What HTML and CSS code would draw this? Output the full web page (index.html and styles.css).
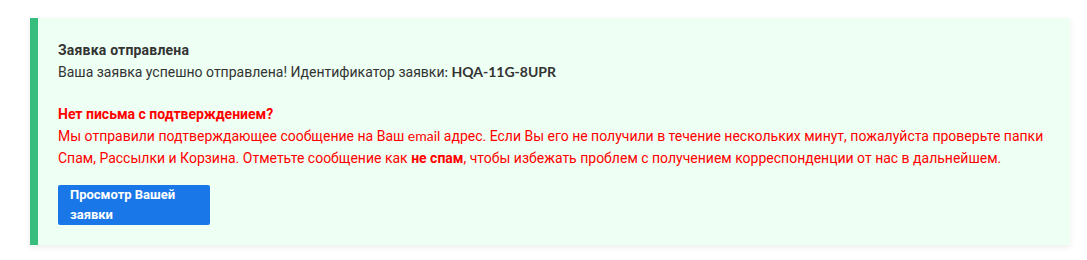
FILE: index.html
```html
<!DOCTYPE html>
<html lang="ru">
<head>
  <meta charset="UTF-8" />
  <title>Заявка отправлена</title>
  <link rel="stylesheet" href="styles.css">
</head>
<body>
  <div class="notice">
    <div class="notice-title">Заявка отправлена</div>
    <div>Ваша заявка успешно отправлена! Идентификатор заявки<span class="latin">:</span> <b class="latin">HQA-11G-8UPR</b></div>

    <div class="warn">
      <div class="warn-title">Нет письма с подтверждением?</div>
      <div>Мы отправили подтверждающее сообщение на Ваш <span class="latin">email</span> адрес. Если Вы его не получили в течение нескольких минут, пожалуйста проверьте папки Спам, Рассылки и Корзина. Отметьте сообщение как <b>не спам</b>, чтобы избежать проблем с получением корреспонденции от нас в дальнейшем.</div>
    </div>

    <a class="btn" href="#">Просмотр Вашей заявки</a>
  </div>
</body>
</html>
```
FILE: styles.css
```css
body {
  margin: 0;
  padding: 18px 17px 15px 30px;
  background: #fff;
  font-family: Roboto, "Noto Sans", sans-serif;
  font-size: 14px;
  color: #333;
}

.notice {
  background: #eefff3;
  border-left: 8px solid #37bd7c;
  box-shadow: 0 2px 6px rgba(0,0,0,0.08);
  padding: 22px 20px 20px 20px;
  line-height: 21px;
}

.notice-title {
  font-weight: bold;
  letter-spacing: 0.2px;
}

.latin {
  font-family: Lato, sans-serif;
}

.warn {
  margin-top: 20px;
  color: #ff0000;
  line-height: 22px;
}

.warn-title {
  font-weight: bold;
}

.btn {
  display: block;
  width: 128px;
  margin-top: 16px;
  padding: 0 12px;
  background: #1a77e8;
  border-radius: 2px;
  color: #fff;
  font-weight: bold;
  font-size: 13px;
  line-height: 20px;
  text-decoration: none;
}
```
